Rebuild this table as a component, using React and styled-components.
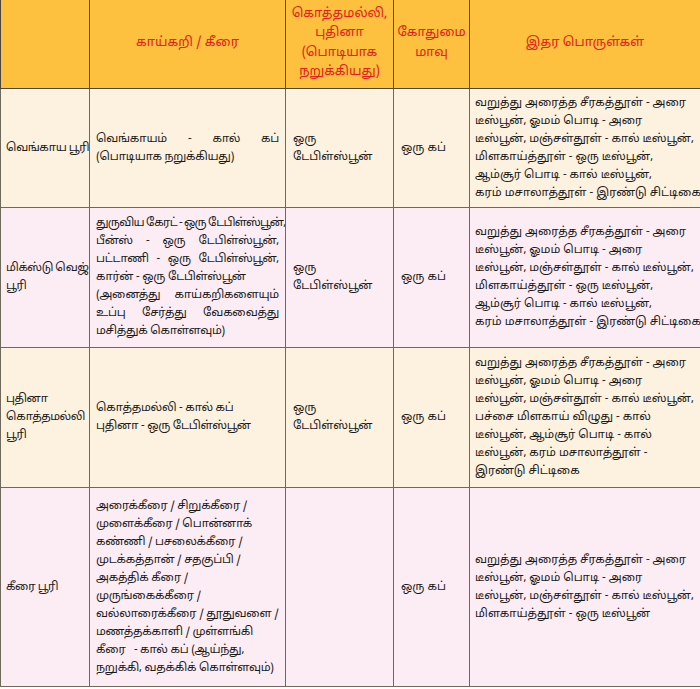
import React from 'react';
import styled, { createGlobalStyle } from 'styled-components';

const GlobalStyle = createGlobalStyle`
  html, body {
    margin: 0;
    padding: 0;
    background: #ffffff;
  }
  body {
    font-family: "Noto Sans Tamil", "Noto Sans", "DejaVu Sans", sans-serif;
  }
`;

const Table = styled.table`
  width: 700px;
  border-collapse: collapse;
  table-layout: fixed;
  font-size: 11.5px;
  line-height: 18px;
  color: #1a1a1a;
`;

const Col = styled.col`
  width: ${(props) => props.w}px;
`;

const HeadRow = styled.tr`
  height: 88px;
  background: #fdc03f;
`;

const HeadCell = styled.th`
  border: 1px solid #4d463a;
  border-top: none;
  color: #e3201b;
  font-weight: 400;
  font-size: 13px;
  line-height: 19.5px;
  text-align: center;
  vertical-align: middle;
  padding: 0 2px;
  white-space: nowrap;
`;

const Row = styled.tr`
  height: ${(props) => props.h}px;
  background: ${(props) => (props.pink ? '#fcedf4' : '#fdf1df')};
`;

const Cell = styled.td`
  border: 1px solid #6f685c;
  vertical-align: middle;
  padding: 0 ${(props) => props.pad || 7}px;
  letter-spacing: ${(props) => props.squeeze || 0}px;
  overflow: hidden;
`;

const Line = styled.span`
  display: block;
  white-space: nowrap;
`;

const SpreadLine = styled.span`
  display: flex;
  justify-content: space-between;
  gap: ${(props) => (props.tight ? 2 : 3)}px;
  white-space: nowrap;
  letter-spacing: ${(props) => (props.tight ? '-0.7px' : 'inherit')};
`;

// '~' marks a line spread to the full cell width, '~!' a squeezed one
const Lines = ({ items }) =>
  items.map((text, idx) => {
    if (!text.startsWith('~')) return <Line key={idx}>{text}</Line>;
    const tight = text.startsWith('~!');
    return (
      <SpreadLine key={idx} tight={tight}>
        {text
          .slice(tight ? 2 : 1)
          .split(' ')
          .map((word, i) => (
            <span key={i}>{word}</span>
          ))}
      </SpreadLine>
    );
  });

const spices = [
  'வறுத்து அரைத்த சீரகத்தூள் - அரை',
  'டீஸ்பூன், ஓமம் பொடி - அரை',
  'டீஸ்பூன், மஞ்சள்தூள் - கால் டீஸ்பூன்,',
  'மிளகாய்த்தூள் - ஒரு டீஸ்பூன்,',
  'ஆம்சூர் பொடி - கால் டீஸ்பூன்,',
  'கரம் மசாலாத்தூள் - இரண்டு சிட்டிகை',
];

const rows = [
  {
    h: 119,
    name: ['வெங்காய பூரி'],
    veg: ['~வெங்காயம் - கால் கப்', '(பொடியாக நறுக்கியது)'],
    herb: ['ஒரு', 'டேபிள்ஸ்பூன்'],
    flour: ['ஒரு கப்'],
    other: spices,
  },
  {
    h: 140,
    pink: true,
    name: ['மிக்ஸ்டு வெஜ்', 'பூரி'],
    veg: [
      '~!துருவிய கேரட் - ஒரு டேபிள்ஸ்பூன்,',
      '~பீன்ஸ் - ஒரு டேபிள்ஸ்பூன்,',
      '~பட்டாணி - ஒரு டேபிள்ஸ்பூன்,',
      'கார்ன் - ஒரு டேபிள்ஸ்பூன்',
      '~(அனைத்து காய்கறிகளையும்',
      '~உப்பு சேர்த்து வேகவைத்து',
      'மசித்துக் கொள்ளவும்)',
    ],
    herb: ['ஒரு', 'டேபிள்ஸ்பூன்'],
    flour: ['ஒரு கப்'],
    other: spices,
  },
  {
    h: 140,
    name: ['புதினா', 'கொத்தமல்லி', 'பூரி'],
    veg: ['கொத்தமல்லி - கால் கப்', 'புதினா - ஒரு டேபிள்ஸ்பூன்'],
    herb: ['ஒரு', 'டேபிள்ஸ்பூன்'],
    flour: ['ஒரு கப்'],
    other: [
      'வறுத்து அரைத்த சீரகத்தூள் - அரை',
      'டீஸ்பூன், ஓமம் பொடி - அரை',
      'டீஸ்பூன், மஞ்சள்தூள் - கால் டீஸ்பூன்,',
      'பச்சை மிளகாய் விழுது - கால்',
      'டீஸ்பூன், ஆம்சூர் பொடி - கால்',
      'டீஸ்பூன், கரம் மசாலாத்தூள் -',
      'இரண்டு சிட்டிகை',
    ],
  },
  {
    h: 199,
    pink: true,
    name: ['கீரை பூரி'],
    veg: [
      'அரைக்கீரை / சிறுக்கீரை /',
      'முளைக்கீரை / பொன்னாக்',
      'கண்ணி / பசலைக்கீரை /',
      'முடக்கத்தான் / சதகுப்பி /',
      'அகத்திக் கீரை /',
      'முருங்கைக்கீரை /',
      'வல்லாரைக்கீரை / தூதுவளை /',
      'மணத்தக்காளி / முள்ளங்கி',
      'கீரை \u00a0 - கால் கப் (ஆய்ந்து,',
      'நறுக்கி, வதக்கிக் கொள்ளவும்)',
    ],
    herb: [],
    flour: ['ஒரு கப்'],
    other: spices.slice(0, 3).concat('மிளகாய்த்தூள் - ஒரு டீஸ்பூன்'),
  },
];

const App = () => {
  return (
    <>
      <GlobalStyle />
      <Table>
        <colgroup>
          <Col w={89} />
          <Col w={196} />
          <Col w={108} />
          <Col w={76} />
          <Col w={231} />
        </colgroup>
        <thead>
          <HeadRow>
            <HeadCell />
            <HeadCell>காய்கறி / கீரை</HeadCell>
            <HeadCell>
              கொத்தமல்லி,
              <br />
              புதினா
              <br />
              (பொடியாக
              <br />
              நறுக்கியது)
            </HeadCell>
            <HeadCell>
              கோதுமை
              <br />
              மாவு
            </HeadCell>
            <HeadCell>இதர பொருள்கள்</HeadCell>
          </HeadRow>
        </thead>
        <tbody>
          {rows.map((row, idx) => (
            <Row key={idx} h={row.h} pink={row.pink}>
              <Cell pad={5} squeeze={-0.5}>
                <Lines items={row.name} />
              </Cell>
              <Cell pad={6} squeeze={-0.25}>
                <Lines items={row.veg} />
              </Cell>
              <Cell>
                <Lines items={row.herb} />
              </Cell>
              <Cell>
                <Lines items={row.flour} />
              </Cell>
              <Cell pad={5}>
                <Lines items={row.other} />
              </Cell>
            </Row>
          ))}
        </tbody>
      </Table>
    </>
  );
};

export default App;
